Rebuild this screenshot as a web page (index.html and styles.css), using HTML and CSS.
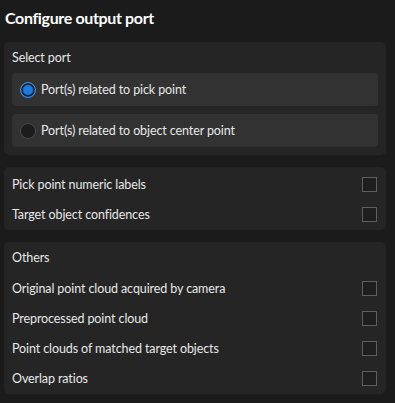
FILE: index.html
```html
<!DOCTYPE html>
<html lang="en">
<head>
    <meta charset="UTF-8">
    <title>Configure output port</title>
    <link rel="stylesheet" href="styles.css">
</head>
<body>
    <h1 class="title">Configure output port</h1>

    <div class="panel">
        <div class="panel-header">Select port</div>
        <div class="options">
            <label class="option">
                <span class="radio checked"></span>
                Port(s) related to pick point
            </label>
            <label class="option">
                <span class="radio"></span>
                Port(s) related to object center point
            </label>
        </div>
    </div>

    <div class="panel">
        <div class="row">
            <span>Pick point numeric labels</span>
            <span class="checkbox"></span>
        </div>
        <div class="row">
            <span>Target object confidences</span>
            <span class="checkbox"></span>
        </div>
    </div>

    <div class="panel">
        <div class="panel-header">Others</div>
        <div class="row">
            <span>Original point cloud acquired by camera</span>
            <span class="checkbox"></span>
        </div>
        <div class="row">
            <span>Preprocessed point cloud</span>
            <span class="checkbox"></span>
        </div>
        <div class="row">
            <span>Point clouds of matched target objects</span>
            <span class="checkbox"></span>
        </div>
        <div class="row">
            <span>Overlap ratios</span>
            <span class="checkbox"></span>
        </div>
    </div>
</body>
</html>
```

FILE: styles.css
```css
* {
    box-sizing: border-box;
    font-family: Lato, 'Noto Sans', sans-serif;
}

body {
    margin: 0;
    padding: 0 9px 0 4px;
    background-color: #1b1b1b;
    color: #e8e8e8;
    font-size: 12.5px;
    letter-spacing: -0.1px;
}

.title {
    margin: 0;
    height: 42px;
    padding-left: 1px;
    line-height: 36px;
    font-size: 16px;
    font-weight: bold;
    letter-spacing: -0.35px;
    color: #ffffff;
}

.panel {
    background-color: #252525;
    border-radius: 5px;
    padding: 2px 9px 1px 8px;
    margin-bottom: 12px;
}

.panel-header {
    height: 29px;
    line-height: 28px;
}

.options {
    display: flex;
    flex-direction: column;
    gap: 8px;
    padding-bottom: 7px;
}

.option {
    display: flex;
    align-items: center;
    gap: 5px;
    height: 33px;
    padding-left: 8px;
    background-color: #323232;
    border-radius: 4px;
    margin-right: -1px;
}

.radio {
    width: 16px;
    height: 16px;
    border-radius: 50%;
    border: 1px solid #4a4a4a;
    background-color: #1c1c1c;
}

.radio.checked {
    border: 1.5px solid #3b8fe6;
    background-color: #1f7ae0;
    box-shadow: inset 0 0 0 2px #1f2a38;
}

.row {
    display: flex;
    justify-content: space-between;
    align-items: center;
    height: 30px;
}

.checkbox {
    width: 15px;
    height: 15px;
    border: 1px solid #5e5e5e;
    background-color: #1e1e1e;
}
```
